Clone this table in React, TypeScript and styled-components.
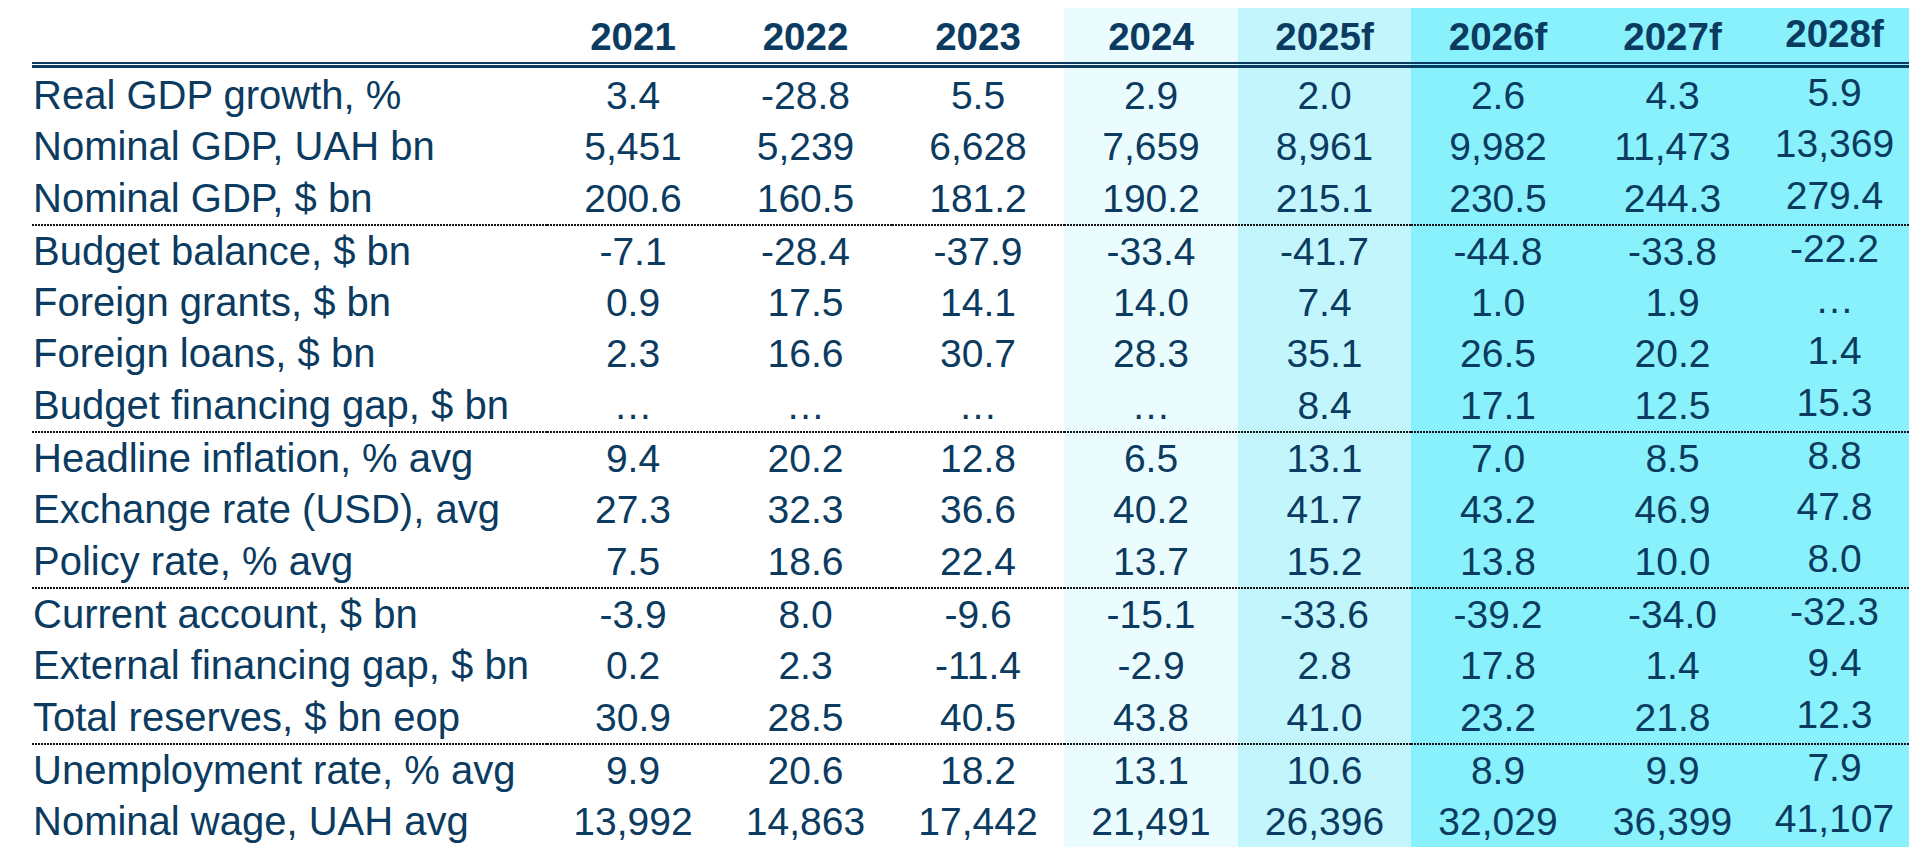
import styled, { createGlobalStyle } from 'styled-components';

const NAVY = '#0b3b60';
const DOTS = '#141414';

const TONES = {
  none: '#ffffff',
  pale: '#ebfcfe',
  light: '#c2f6fc',
  cyan: '#89f1fb',
} as const;

type Tone = keyof typeof TONES;

const GlobalStyle = createGlobalStyle`
  html, body {
    margin: 0;
    padding: 0;
    background: #ffffff;
  }
  body {
    font-family: "Liberation Sans", Arial, sans-serif;
    color: ${NAVY};
  }
`;

const Page = styled.div`
  width: 1928px;
  height: 860px;
  overflow: hidden;
  padding: 8px 0 0 32px;
  box-sizing: border-box;
`;

const Table = styled.div`
  display: flex;
  flex-direction: column;
  width: 1877px;
`;

const Row = styled.div`
  display: grid;
  grid-template-columns: 515px 172px 173px 172px 174px 173px 174px 175px 149px;
`;

const HeadCell = styled.div<{ $tone: Tone; $raise?: boolean }>`
  height: 62px;
  box-sizing: border-box;
  padding-top: ${(p) => (p.$raise ? 6.5 : 9.5)}px;
  background: linear-gradient(
    to top,
    ${(p) => TONES[p.$tone]} 0 2px,
    ${NAVY} 2px 5px,
    ${(p) => TONES[p.$tone]} 5px 6.3px,
    ${NAVY} 6.3px 8px,
    ${(p) => TONES[p.$tone]} 8px
  );
  font-size: 38.5px;
  line-height: 38.5px;
  font-weight: 700;
  text-align: center;
  white-space: nowrap;
`;

/* dotted group divider: 2px dots on a 3px pitch, drawn over the column tone */
const Cell = styled.div<{ $tone: Tone; $divider?: boolean; $raise?: boolean }>`
  height: ${(p) => (p.$divider ? 53.3 : 51.3)}px;
  box-sizing: border-box;
  padding-top: ${(p) => (p.$divider ? 2 : 0)}px;
  background-color: ${(p) => TONES[p.$tone]};
  background-image: ${(p) =>
    p.$divider ? `linear-gradient(to right, ${DOTS} 2px, transparent 2px)` : 'none'};
  background-size: 3px 2px;
  background-repeat: repeat-x;
  background-position: 0 0;
  font-size: 39px;
  line-height: ${(p) => (p.$raise ? 45.6 : 51.3)}px;
  text-align: center;
  white-space: nowrap;
`;

const LabelCell = styled(Cell)`
  font-size: 40px;
  text-align: left;
  padding-left: 1px;
`;

const columns: { year: string; tone: Tone; raise?: boolean }[] = [
  { year: '2021', tone: 'none' },
  { year: '2022', tone: 'none' },
  { year: '2023', tone: 'none' },
  { year: '2024', tone: 'pale' },
  { year: '2025f', tone: 'light' },
  { year: '2026f', tone: 'cyan' },
  { year: '2027f', tone: 'cyan' },
  { year: '2028f', tone: 'cyan', raise: true },
];

const groups: [string, string[]][][] = [
  [
    ['Real GDP growth, %', ['3.4', '-28.8', '5.5', '2.9', '2.0', '2.6', '4.3', '5.9']],
    ['Nominal GDP, UAH bn', ['5,451', '5,239', '6,628', '7,659', '8,961', '9,982', '11,473', '13,369']],
    ['Nominal GDP, $ bn', ['200.6', '160.5', '181.2', '190.2', '215.1', '230.5', '244.3', '279.4']],
  ],
  [
    ['Budget balance, $ bn', ['-7.1', '-28.4', '-37.9', '-33.4', '-41.7', '-44.8', '-33.8', '-22.2']],
    ['Foreign grants, $ bn', ['0.9', '17.5', '14.1', '14.0', '7.4', '1.0', '1.9', '…']],
    ['Foreign loans, $ bn', ['2.3', '16.6', '30.7', '28.3', '35.1', '26.5', '20.2', '1.4']],
    ['Budget financing gap, $ bn', ['…', '…', '…', '…', '8.4', '17.1', '12.5', '15.3']],
  ],
  [
    ['Headline inflation, % avg', ['9.4', '20.2', '12.8', '6.5', '13.1', '7.0', '8.5', '8.8']],
    ['Exchange rate (USD), avg', ['27.3', '32.3', '36.6', '40.2', '41.7', '43.2', '46.9', '47.8']],
    ['Policy rate, % avg', ['7.5', '18.6', '22.4', '13.7', '15.2', '13.8', '10.0', '8.0']],
  ],
  [
    ['Current account, $ bn', ['-3.9', '8.0', '-9.6', '-15.1', '-33.6', '-39.2', '-34.0', '-32.3']],
    ['External financing gap, $ bn', ['0.2', '2.3', '-11.4', '-2.9', '2.8', '17.8', '1.4', '9.4']],
    ['Total reserves, $ bn eop', ['30.9', '28.5', '40.5', '43.8', '41.0', '23.2', '21.8', '12.3']],
  ],
  [
    ['Unemployment rate, % avg', ['9.9', '20.6', '18.2', '13.1', '10.6', '8.9', '9.9', '7.9']],
    ['Nominal wage, UAH avg', ['13,992', '14,863', '17,442', '21,491', '26,396', '32,029', '36,399', '41,107']],
  ],
];

export default function App() {
  return (
    <Page>
      <GlobalStyle />
      <Table>
        <Row>
          <HeadCell $tone="none" />
          {columns.map((c) => (
            <HeadCell key={c.year} $tone={c.tone} $raise={c.raise}>
              {c.year}
            </HeadCell>
          ))}
        </Row>
        {groups.map((group, g) =>
          group.map(([label, values], r) => {
            const divider = g > 0 && r === 0;
            return (
              <Row key={label}>
                <LabelCell $tone="none" $divider={divider}>
                  {label}
                </LabelCell>
                {values.map((v, i) => (
                  <Cell
                    key={i}
                    $tone={columns[i].tone}
                    $divider={divider}
                    $raise={columns[i].raise}
                  >
                    {v}
                  </Cell>
                ))}
              </Row>
            );
          })
        )}
      </Table>
    </Page>
  );
}
